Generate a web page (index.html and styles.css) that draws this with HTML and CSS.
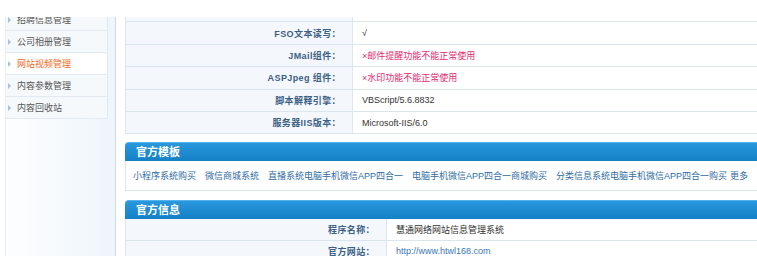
FILE: index.html
```html
<!DOCTYPE html>
<html lang="zh-CN">
<head>
  <meta charset="UTF-8">
  <meta name="viewport" content="width=device-width, initial-scale=1.0">
  <title>管理首页</title>
  <link rel="stylesheet" href="styles.css">
</head>
<body>

  <div class="topmask"></div>

  <div class="layout">
    <aside class="sidebar">
      <ul class="menu">
        <li><i class="arrow"></i>招聘信息管理</li>
        <li><i class="arrow"></i>公司相册管理</li>
        <li class="active"><i class="arrow"></i>网站视频管理</li>
        <li><i class="arrow"></i>内容参数管理</li>
        <li><i class="arrow"></i>内容回收站</li>
      </ul>
    </aside>

    <main class="main">
      <div class="info-table server">
        <div class="row"><div class="label">站点物理路径：</div><div class="value">D:\wwwroot\</div></div>
        <div class="row"><div class="label">FSO文本读写：</div><div class="value">√</div></div>
        <div class="row"><div class="label">JMail组件：</div><div class="value warn">×邮件提醒功能不能正常使用</div></div>
        <div class="row"><div class="label">ASPJpeg 组件：</div><div class="value warn">×水印功能不能正常使用</div></div>
        <div class="row"><div class="label">脚本解释引擎：</div><div class="value">VBScript/5.6.8832</div></div>
        <div class="row"><div class="label">服务器IIS版本：</div><div class="value">Microsoft-IIS/6.0</div></div>
      </div>

      <div class="panel">
        <div class="panel-head">官方模板</div>
        <div class="links">
          <a href="#">小程序系统购买</a>
          <a href="#">微信商城系统</a>
          <a href="#">直播系统电脑手机微信APP四合一</a>
          <a href="#">电脑手机微信APP四合一商城购买</a>
          <a href="#">分类信息系统电脑手机微信APP四合一购买</a><a href="#" class="more">更多</a>
        </div>
      </div>

      <div class="panel">
        <div class="panel-head">官方信息</div>
        <div class="info-table official">
          <div class="row"><div class="label">程序名称：</div><div class="value">慧通网络网站信息管理系统</div></div>
          <div class="row"><div class="label">官方网站：</div><div class="value"><a href="#">http://www.htwl168.com</a></div></div>
        </div>
      </div>
    </main>
  </div>

</body>
</html>
```

FILE: styles.css
```css
body {
  margin: 0;
  font-family: "Liberation Sans", "Noto Sans CJK SC", sans-serif;
  font-size: 9px;
  color: #333;
  background: #fff;
  height: 256px;
  overflow: hidden;
}

a {
  color: #2f6ca5;
  text-decoration: none;
}

.topmask {
  position: fixed;
  top: 0; left: 0; right: 0;
  height: 17px;
  background: #fff;
  z-index: 5;
}

.layout {
  display: flex;
  height: 256px;
}

/* left menu */
.sidebar {
  width: 111px;
  margin-left: 5px;
  padding-top: 9px;
  box-sizing: border-box;
  background: linear-gradient(90deg, #fdfeff, #eef5fb);
  border-left: 1px solid #e6edf3;
  border-right: 1px solid #cddae6;
}

.menu {
  list-style: none;
  margin: 0;
  padding: 0;
  width: 102px;
}

.menu li {
  height: 22px;
  box-sizing: border-box;
  display: flex;
  align-items: center;
  gap: 6px;
  padding-left: 2px;
  color: #555;
  background: #f6f9fc;
  border-bottom: 1px solid #e2e9f0;
  border-right: 1px solid #e2e9f0;
}

.menu li.active {
  color: #f26a24;
  background: #fff;
}

.arrow {
  width: 0;
  height: 0;
  border-left: 3px solid #a8bfd4;
  border-top: 3px solid transparent;
  border-bottom: 3px solid transparent;
}

/* main area */
.main {
  flex: 1;
  padding-left: 9px;
  overflow: hidden;
}

.info-table {
  width: 760px;
}

.server {
  border-left: 1px solid #dce6ee;
}

.row {
  display: grid;
  grid-template-columns: 227px 1fr;
  height: 22.4px;
  box-sizing: border-box;
  border-bottom: 1px solid #dbe5ee;
}

.official .row {
  grid-template-columns: 261px 1fr;
  height: 22px;
}

.label {
  display: flex;
  align-items: center;
  justify-content: flex-end;
  padding-right: 11px;
  background: #f4f8fc;
  border-right: 1px solid #dde7ef;
  color: #3c5f86;
  font-weight: bold;
  letter-spacing: 0.4px;
}

.value {
  display: flex;
  align-items: center;
  padding-left: 9px;
  background: #fff;
}

.value.warn {
  color: #e5286e;
}

.official .value a {
  color: #3a78b5;
}

/* blue boxes */
.panel {
  margin-top: 8px;
  width: 760px;
  border: 1px solid #dce6ee;
  border-top: none;
  border-radius: 4px 4px 0 0;
}

.panel + .panel {
  margin-top: 8.5px;
}

.panel-head {
  height: 19px;
  line-height: 19px;
  padding-left: 11px;
  margin: 0 -1px;
  border-radius: 4px 4px 0 0;
  background: linear-gradient(#2a98de, #1480c5);
  border-top: 1px solid #56b2ea;
  box-sizing: border-box;
  color: #fff;
  font-size: 11px;
  font-weight: bold;
}

.links {
  height: 29px;
  display: flex;
  align-items: center;
  gap: 9px;
  padding-left: 7px;
}

.links .more {
  margin-left: -6px;
}
```
